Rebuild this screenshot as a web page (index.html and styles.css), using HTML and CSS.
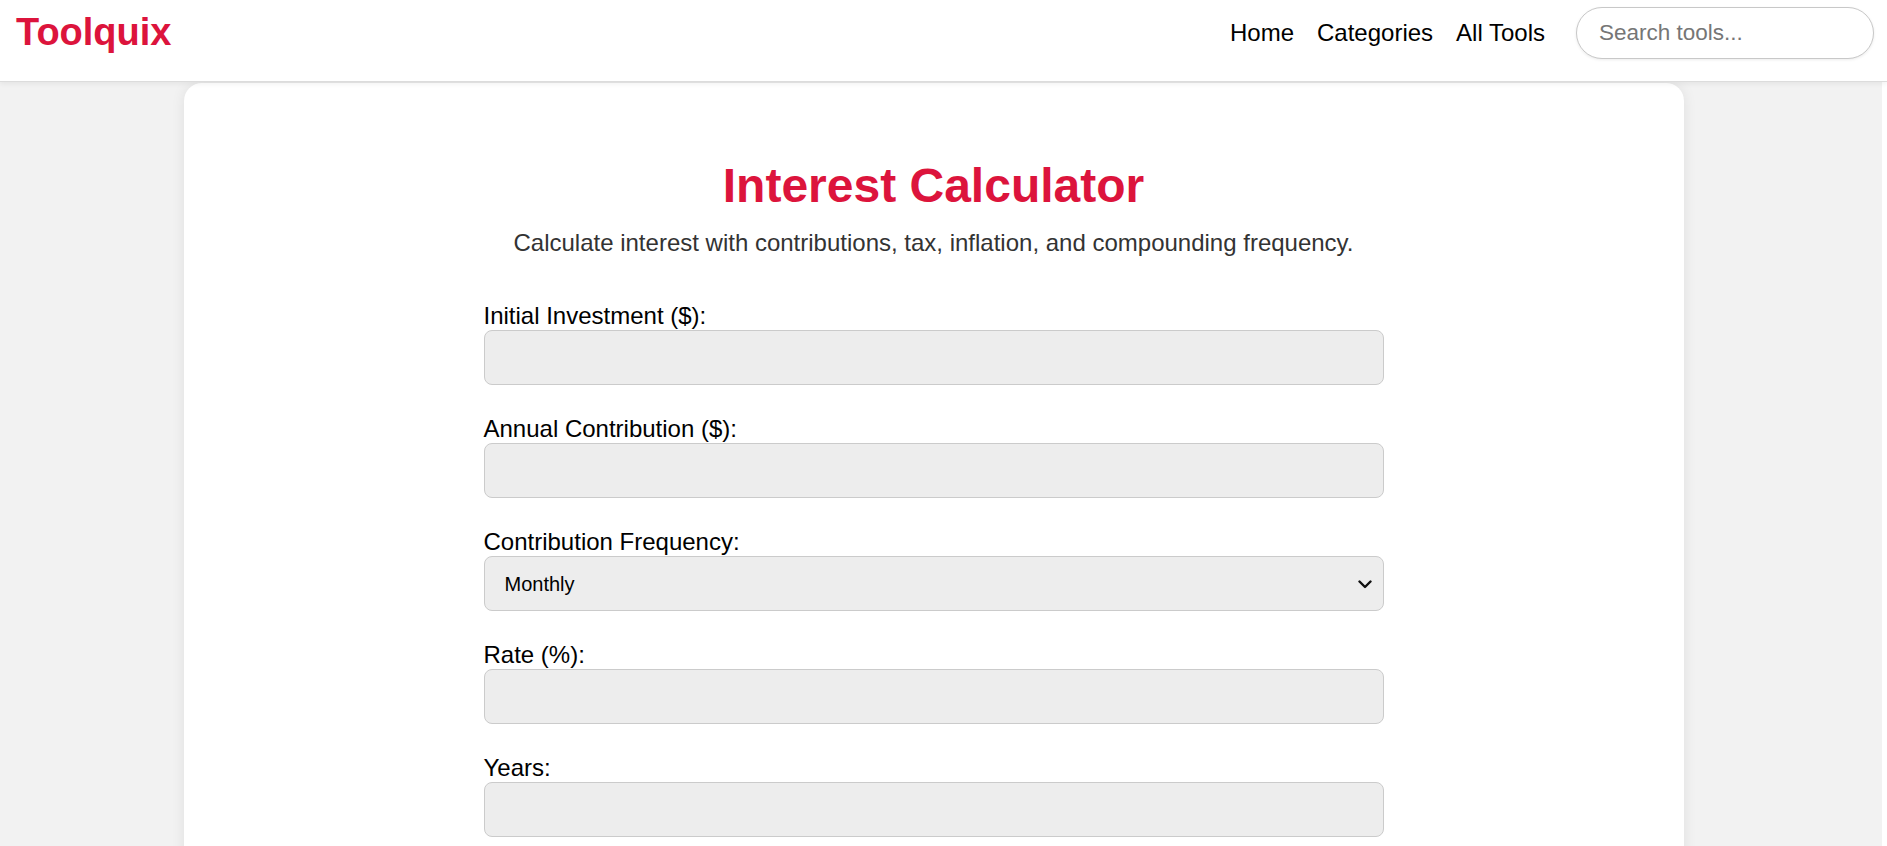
FILE: index.html
```html
<!DOCTYPE html>
<html lang="en">
<head>
<meta charset="utf-8">
<title>Interest Calculator - Toolquix</title>
<link rel="stylesheet" href="styles.css">
</head>
<body>
<header class="site-header">
  <a class="logo" href="#">Toolquix</a>
  <nav class="nav">
    <a href="#">Home</a>
    <a href="#">Categories</a>
    <a href="#">All Tools</a>
    <input class="search" type="text" placeholder="Search tools...">
  </nav>
</header>
<main class="page">
  <section class="card">
    <h1 class="title">Interest Calculator</h1>
    <p class="subtitle">Calculate interest with contributions, tax, inflation, and compounding frequency.</p>
    <form class="form">
      <label class="field">
        <span class="label">Initial Investment ($):</span>
        <input class="control" type="text">
      </label>
      <label class="field">
        <span class="label">Annual Contribution ($):</span>
        <input class="control" type="text">
      </label>
      <label class="field">
        <span class="label">Contribution Frequency:</span>
        <span class="select-wrap">
          <select class="control select">
            <option>Monthly</option>
            <option>Quarterly</option>
            <option>Annually</option>
          </select>
          <svg class="chevron" width="14" height="9" viewBox="0 0 14 9"><path d="M1.5 1.5 L7 7 L12.5 1.5" fill="none" stroke="#111" stroke-width="2.4" stroke-linecap="round" stroke-linejoin="round"/></svg>
        </span>
      </label>
      <label class="field">
        <span class="label">Rate (%):</span>
        <input class="control" type="text">
      </label>
      <label class="field">
        <span class="label">Years:</span>
        <input class="control" type="text">
      </label>
    </form>
  </section>
</main>
</body>
</html>
```
FILE: styles.css
```css
html, body {
  margin: 0;
  padding: 0;
  background: #fff;
  font-family: "Liberation Sans", Arial, sans-serif;
  color: #000;
}

.site-header {
  display: flex;
  justify-content: space-between;
  align-items: center;
  height: 82px;
  box-sizing: border-box;
  padding: 7px 13px 23px 16px;
  background: #fff;
  border-bottom: 1px solid #dcdcdc;
  position: relative;
  z-index: 2;
  box-shadow: 0 2px 5px rgba(0, 0, 0, 0.06);
}

.logo {
  font-size: 38px;
  font-weight: bold;
  color: #dc143c;
  text-decoration: none;
}

.nav {
  display: flex;
  align-items: center;
  gap: 23px;
}

.nav a {
  font-size: 24px;
  color: #000;
  text-decoration: none;
}

.search {
  margin-left: 8px;
  width: 298px;
  height: 52px;
  box-sizing: border-box;
  border: 1px solid #c8c8c8;
  border-radius: 26px;
  padding: 0 22px;
  font-family: "Liberation Sans", Arial, sans-serif;
  font-size: 22.5px;
  outline: none;
  box-shadow: 0 1px 3px rgba(0, 0, 0, 0.08);
}

.search::placeholder {
  color: #767676;
}

.page {
  background: #f2f2f2;
  margin-right: 5px;
  padding-right: 15px;
  display: flex;
  justify-content: center;
  min-height: 764px;
}

.card {
  width: 1500px;
  margin-top: 1px;
  background: #fff;
  border-radius: 18px;
  box-shadow: 0 0 14px rgba(0, 0, 0, 0.08);
  padding: 75px 0 40px;
  box-sizing: border-box;
  display: flex;
  flex-direction: column;
  align-items: center;
}

.title {
  margin: 0;
  font-size: 48px;
  line-height: 55px;
  font-weight: bold;
  color: #dc143c;
  text-align: center;
}

.subtitle {
  margin: 16px 0 0;
  font-size: 24px;
  line-height: 28px;
  color: #333;
  text-align: center;
}

.form {
  width: 900px;
  margin-top: 45px;
  display: flex;
  flex-direction: column;
  gap: 30px;
}

.field {
  display: flex;
  flex-direction: column;
}

.label {
  font-size: 24px;
  line-height: 28px;
  color: #000;
}

.control {
  display: block;
  width: 100%;
  height: 55px;
  box-sizing: border-box;
  background: #ededed;
  border: 1px solid #cbcbcb;
  border-radius: 8px;
  padding: 0 20px;
  font-family: "Liberation Sans", Arial, sans-serif;
  font-size: 20px;
  color: #000;
  outline: none;
}

.select-wrap {
  position: relative;
  display: block;
}

.select {
  appearance: none;
  -webkit-appearance: none;
}

.chevron {
  position: absolute;
  right: 12px;
  top: 24px;
  pointer-events: none;
}
```
